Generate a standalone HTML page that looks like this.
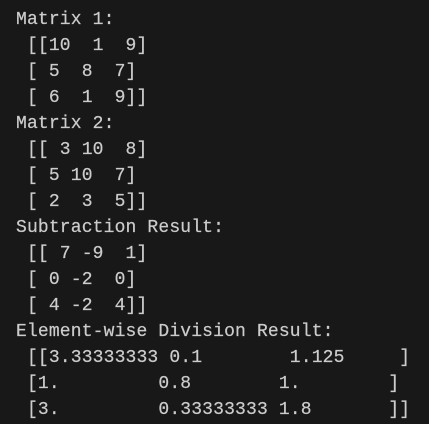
<!DOCTYPE html>
<html><head><style>
html,body{margin:0;padding:0;background:#181818;width:429px;height:424px;overflow:hidden}
pre{margin:0;position:absolute;left:16px;top:7px;font-family:"Liberation Mono",monospace;font-size:18px;line-height:26px;color:#cccccc;letter-spacing:0.15px;-webkit-text-stroke:0.2px #cccccc}
.top{position:absolute;top:-4px;left:90px;width:300px;height:6px}
</style></head><body>
<div class="top"><span style="position:absolute;left:0;width:14px;height:3px;background:#3a96dd"></span><span style="position:absolute;left:68px;width:14px;height:3px;background:#3a96dd"></span><span style="position:absolute;left:180px;width:14px;height:3px;background:#3a96dd"></span><span style="position:absolute;left:260px;width:14px;height:3px;background:#3a96dd"></span></div>
<pre>Matrix 1:
 [[10  1  9]
 [ 5  8  7]
 [ 6  1  9]]
Matrix 2:
 [[ 3 10  8]
 [ 5 10  7]
 [ 2  3  5]]
Subtraction Result:
 [[ 7 -9  1]
 [ 0 -2  0]
 [ 4 -2  4]]
Element-wise Division Result:
 [[3.33333333 0.1        1.125     ]
 [1.         0.8        1.        ]
 [3.         0.33333333 1.8       ]]</pre>
</body></html>
